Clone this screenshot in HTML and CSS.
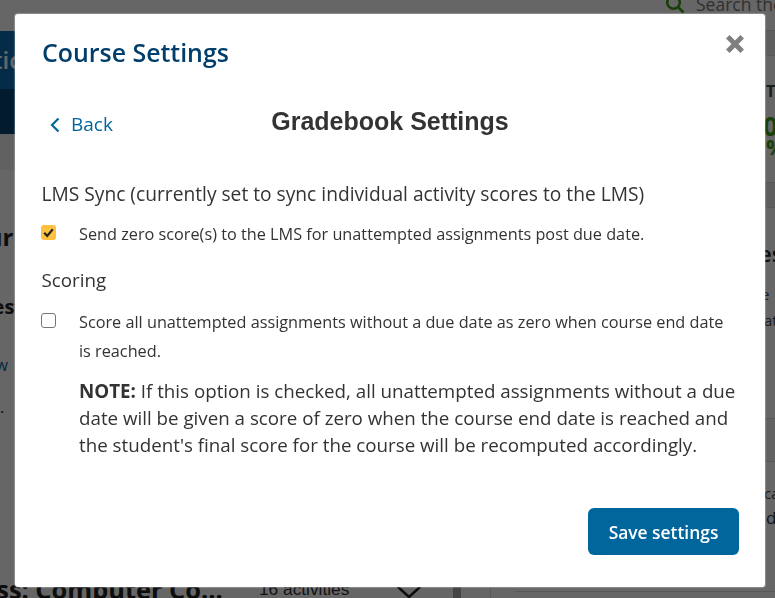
FILE: index.html
```html
<!DOCTYPE html>
<html lang="en">
<head>
<meta charset="utf-8">
<title>Course Settings</title>
<link rel="stylesheet" href="styles.css">
</head>
<body>
<div class="page">
  <div class="band-top"></div>
  <div class="band-blue"><span class="band-text">Practic</span></div>
  <div class="band-navy"></div>

  <div class="peek search">
    <svg class="search-icon" viewBox="0 0 20 20" aria-hidden="true"><circle cx="8.5" cy="8.5" r="6.3"/><path d="M13 13l5.5 5.5"/></svg>
    <span>Search the</span>
  </div>
  <span class="peek l-a">Tour</span>
  <span class="peek l-b">Test</span>
  <span class="peek l-c">View</span>
  <span class="peek l-d">.</span>
  <span class="peek l-e">Class: Computer Co...</span>
  <span class="peek l-f">16 activities</span>
  <svg class="peek chev" viewBox="0 0 26 14" aria-hidden="true"><path d="M1.5 1.5L13 12L24.5 1.5"/></svg>
  <span class="peek r-a">TE</span>
  <span class="peek r-b">0</span>
  <span class="peek r-b2">%</span>
  <span class="peek r-c">es</span>
  <span class="peek r-d">e</span>
  <span class="peek r-e">at</span>
  <span class="peek r-f">ca</span>
  <span class="peek r-g">d</span>
  <div class="peek strip s1"></div>
  <div class="peek strip s2"></div>
  <div class="peek strip s3"></div>
  <div class="peek rule r5"></div>
  <div class="peek left-strip"></div>
  <div class="peek divider"></div>
</div>

<div class="scrim"></div>

<section class="modal" role="dialog" aria-labelledby="modal-title">
  <header class="modal-head">
    <h1 id="modal-title">Course Settings</h1>
    <button class="close" aria-label="Close">
      <svg viewBox="0 0 20 20" aria-hidden="true"><path d="M2.8 2.8L17.2 17.2M17.2 2.8L2.8 17.2"/></svg>
    </button>
  </header>

  <div class="subhead">
    <a class="back" href="#">
      <svg viewBox="0 0 10 16" aria-hidden="true"><path d="M8.5 1.5L2 8l6.5 6.5"/></svg>
      <span>Back</span>
    </a>
    <h2>Gradebook Settings</h2>
  </div>

  <h3 class="group-title">LMS Sync (currently set to sync individual activity scores to the LMS)</h3>
  <label class="option first">
    <span class="box checked">
      <svg viewBox="0 0 14 14" aria-hidden="true"><path d="M3 7.3l2.8 2.8L11 4"/></svg>
    </span>
    <span class="option-text">Send zero score(s) to the LMS for unattempted assignments post due date.</span>
  </label>

  <h3 class="group-title scoring">Scoring</h3>
  <label class="option">
    <span class="box"></span>
    <span class="option-text">Score all unattempted assignments without a due date as zero when course end date is reached.</span>
  </label>
  <p class="note"><strong>NOTE:</strong> If this option is checked, all unattempted assignments without a due date will be given a score of zero when the course end date is reached and the student's final score for the course will be recomputed accordingly.</p>

  <footer class="modal-foot">
    <button class="save">Save settings</button>
  </footer>
</section>
</body>
</html>
```
FILE: styles.css
```css
* { box-sizing: border-box; }

html, body {
  margin: 0;
  width: 775px;
  height: 598px;
  overflow: hidden;
  background: #666;
  font-family: "Open Sans", "Noto Sans", sans-serif;
}

.page {
  position: relative;
  width: 775px;
  height: 598px;
  overflow: hidden;
  background: #fff;
}

.band-top { height: 31px; }
.band-blue {
  width: 400px;
  height: 58px;
  background: #0a6fb5;
  color: #fff;
  overflow: hidden;
}
.band-text {
  display: block;
  margin-left: -58px;
  margin-top: 13px;
  font-size: 24px;
  font-weight: 600;
  line-height: 32px;
}
.band-navy { width: 400px; height: 45px; background: #054473; }

.peek { position: absolute; color: #222; white-space: nowrap; }
.search { left: 665px; top: -7px; display: flex; align-items: center; gap: 11px; font-size: 17.5px; color: #777; line-height: 22px; }
.search-icon { flex: none; width: 20px; height: 20px; fill: none; stroke: #3f9f14; stroke-width: 2.6; }
.l-a { left: -42px; top: 220px; font-size: 24px; font-weight: 700; }
.l-b { left: -19px; top: 293px; font-size: 20px; font-weight: 700; }
.l-c { left: -27px; top: 354px; font-size: 16px; color: #00639c; }
.l-d { left: 0; top: 396px; font-size: 16px; }
.l-e { left: -43px; top: 572px; font-size: 25.4px; font-weight: 700; }
.l-f { left: 259px; top: 579px; font-size: 17.3px; font-family: "Liberation Sans", sans-serif; color: #333; }
.chev { left: 396px; top: 585px; width: 26px; height: 14px; fill: none; stroke: #222; stroke-width: 2.5; }
.r-a { left: 766px; top: 80px; font-size: 16px; font-weight: 700; color: #444; }
.r-b { left: 763px; top: 108px; font-size: 26px; font-weight: 700; color: #3f9f14; line-height: 36px; }
.r-b2 { left: 766px; top: 134px; font-size: 22px; font-weight: 700; color: #3f9f14; line-height: 24px; }
.r-c { left: 759px; top: 238px; font-size: 22px; font-weight: 600; }
.r-d { left: 761px; top: 284px; font-size: 15px; color: #444; }
.r-e { left: 764px; top: 310px; font-size: 15px; color: #444; }
.r-f { left: 764px; top: 483px; font-size: 15px; color: #444; }
.r-g { left: 766px; top: 506px; font-size: 17px; color: #333; }

.strip { left: 739px; right: 0; height: 26px; background: #ececec; border-top: 1px solid #ddd; border-bottom: 1px solid #ddd; }
.s1 { top: 30px; }
.s2 { top: 182px; }
.s3 { top: 418px; height: 44px; background: #f6f6f6; }
.rule { height: 1px; background: #ddd; }
.r5 { left: 515px; right: 0; top: 591px; }
.left-strip { left: 0; top: 134px; width: 300px; height: 36px; background: #f2f2f2; }
.divider { left: 453px; top: 586px; width: 38px; height: 12px; border-left: 8px solid #aaa; border-right: 1px solid #ddd; }

.scrim {
  position: fixed;
  inset: 0;
  background: rgba(0, 0, 0, 0.6);
}

.modal {
  position: fixed;
  left: 15px;
  top: 14px;
  width: 750px;
  height: 573px;
  padding: 0 26px;
  background: #fff;
  border-radius: 3px;
  box-shadow: 0 0 1px 1px rgba(255, 255, 255, 0.25);
  display: flex;
  flex-direction: column;
}

.modal-head {
  display: flex;
  justify-content: space-between;
  align-items: flex-start;
  height: 78px;
}
.modal-head h1 {
  margin: 20px 0 0 1px;
  font-size: 24.9px;
  line-height: 36px;
  font-weight: 600;
  color: #003e6b;
}
.close {
  margin: 20px -6px 0 0;
  padding: 0;
  width: 20px;
  height: 20px;
  background: none;
  border: 0;
  display: block;
}
.close svg { display: block; width: 20px; height: 20px; fill: none; stroke: #7f7f7f; stroke-width: 5; }

.subhead {
  position: relative;
  display: flex;
  align-items: center;
  justify-content: center;
  height: 30px;
  margin-top: 14px;
}
.subhead h2 {
  margin: 0;
  font-family: "Liberation Sans", Arial, sans-serif;
  font-size: 25px;
  font-weight: 700;
  line-height: 30px;
  color: #333;
}
.back {
  position: absolute;
  left: 9px;
  top: 6px;
  display: flex;
  align-items: center;
  gap: 11px;
  color: #00669c;
  text-decoration: none;
  font-size: 19px;
  line-height: 25px;
}
.back svg { width: 10px; height: 16px; fill: none; stroke: #00669c; stroke-width: 2.2; }

.group-title {
  margin: 0 0 0 0.5px;
  font-size: 19.2px;
  font-weight: 400;
  line-height: 25px;
  color: #333;
}
.modal-head + .subhead + .group-title { margin-top: 45px; }
.scoring { margin-top: 19px; font-size: 18.8px; }

.option {
  display: flex;
  align-items: flex-start;
  gap: 23px;
  margin-top: 18px;
}
.option.first { margin-top: 17px; }
.box {
  flex: none;
  width: 15px;
  height: 15px;
  margin-top: 2px;
  border: 1.5px solid #767676;
  border-radius: 3px;
  background: #fff;
}
.box.checked {
  border: 0;
  background: #fdc13d;
}
.box svg { display: block; width: 15px; height: 15px; fill: none; stroke: #222; stroke-width: 2; }
.option-text {
  font-size: 16.25px;
  line-height: 29px;
  color: #333;
  margin-top: -3px;
  padding-right: 8px;
}
.note {
  margin: 11px 0 0 38px;
  font-size: 18.75px;
  line-height: 27px;
  color: #333;
}
.note strong { font-weight: 700; }

.modal-foot {
  margin-top: auto;
  padding-bottom: 32px;
  display: flex;
  justify-content: flex-end;
}
.save {
  width: 151px;
  height: 47px;
  border: 0;
  border-radius: 6px;
  background: #00669c;
  color: #fff;
  font-family: inherit;
  font-size: 17.4px;
  font-weight: 600;
}
```
